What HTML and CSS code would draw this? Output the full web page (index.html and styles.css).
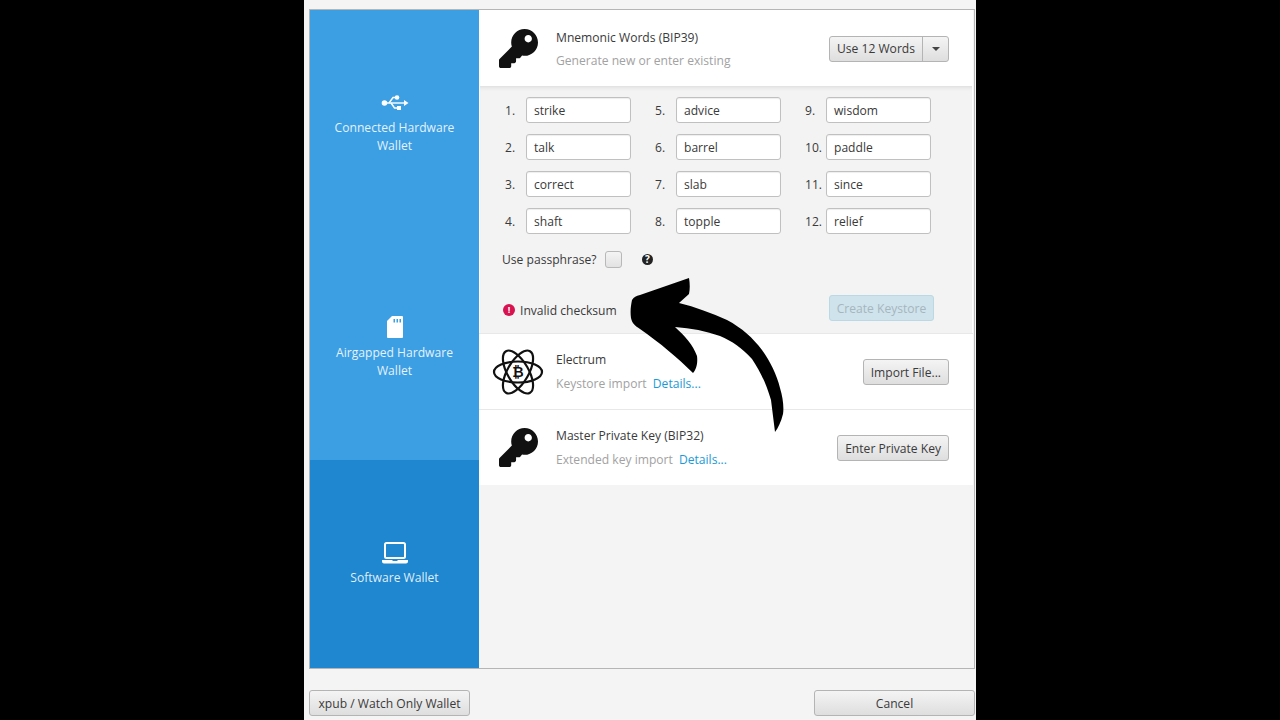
FILE: index.html
```html
<!DOCTYPE html>
<html>
<head>
    <title>Keystore Import</title>
    <meta charset="UTF-8">
    <link rel="stylesheet" href="styles.css">
</head>
<body>
    <div class="window">
	<div class="panel">
	    <div class="sidebar">
		<div class="side-item">
		    <svg class="side-icon" width="28" height="22" viewBox="0 -3 28 22">
			<circle cx="3.500" cy="8" r="2.800" fill="#fff"/>
			<path d="M4 8H24" stroke="#fff" stroke-width="1.400" fill="none"/>
			<path d="M23 5l4.500 3-4.500 3z" fill="#fff"/>
			<path d="M8 8l4-5.500h3M10 8l3.500 5H16" stroke="#fff" stroke-width="1.400" fill="none"/>
			<circle cx="16" cy="2.500" r="2.300" fill="#fff"/>
			<rect x="16" y="11" width="4" height="4" fill="#fff"/>
		    </svg>
		    <div class="side-label">Connected Hardware<br>Wallet</div>
		</div>
		<div class="side-item">
		    <svg class="side-icon sd" width="16" height="22" viewBox="0 0 16 22">
			<path d="M5 0h10a1 1 0 0 1 1 1v20a1 1 0 0 1-1 1H1a1 1 0 0 1-1-1V5z" fill="#fff"/>
			<path d="M6.500 3h1.500v3.500H6.500zM9.500 3h1.500v3.500H9.500zM12.500 3h1.500v3.500h-1.500z" fill="#3d9fe3"/>
		    </svg>
		    <div class="side-label">Airgapped Hardware<br>Wallet</div>
		</div>
		<div class="side-item selected">
		    <svg class="side-icon" width="26" height="22" viewBox="0 0 26 22">
			<rect x="3" y="1" width="20" height="15" rx="1.500" fill="none" stroke="#fff" stroke-width="2"/>
			<path d="M0 18h10l1 1h4l1-1h10v1.500a2 2 0 0 1-2 2H2a2 2 0 0 1-2-2z" fill="#fff"/>
		    </svg>
		    <div class="side-label">Software Wallet</div>
		</div>
	    </div>
	    <div class="content">
		<div class="row row-head">
		    <svg class="row-icon" width="39" height="39" viewBox="0 0 512 512"><path d="M512 176.001C512 273.203 433.202 352 336 352c-11.22 0-22.19-1.062-32.827-3.069l-24.012 27.014A23.999 23.999 0 0 1 261.223 384H224v40c0 13.255-10.745 24-24 24h-40v40c0 13.255-10.745 24-24 24H24c-13.255 0-24-10.745-24-24v-78.059c0-6.365 2.529-12.47 7.029-16.971l161.802-161.802C163.108 213.814 160 195.271 160 176 160 78.798 238.797.001 335.999 0 433.488-.001 512 78.511 512 176.001zM336 128c0 26.51 21.49 48 48 48s48-21.49 48-48-21.49-48-48-48-48 21.49-48 48z" fill="#111"/></svg>
		    <div class="row-text">
			<div class="row-title">Mnemonic Words (BIP39)</div>
			<div class="row-sub">Generate new or enter existing</div>
		    </div>
		    <div class="split-btn">
			<div class="split-main">Use 12 Words</div>
			<div class="split-arrow"><span class="caret"></span></div>
		    </div>
		</div>
		<div class="words">
		    <div class="word-grid">
			<div class="word"><span class="num">1.</span><span class="field">strike</span></div>
			<div class="word"><span class="num">5.</span><span class="field">advice</span></div>
			<div class="word"><span class="num">9.</span><span class="field">wisdom</span></div>
			<div class="word"><span class="num">2.</span><span class="field">talk</span></div>
			<div class="word"><span class="num">6.</span><span class="field">barrel</span></div>
			<div class="word"><span class="num">10.</span><span class="field">paddle</span></div>
			<div class="word"><span class="num">3.</span><span class="field">correct</span></div>
			<div class="word"><span class="num">7.</span><span class="field">slab</span></div>
			<div class="word"><span class="num">11.</span><span class="field">since</span></div>
			<div class="word"><span class="num">4.</span><span class="field">shaft</span></div>
			<div class="word"><span class="num">8.</span><span class="field">topple</span></div>
			<div class="word"><span class="num">12.</span><span class="field">relief</span></div>
		    </div>
		    <div class="passphrase">
			<span class="pass-label">Use passphrase?</span>
			<span class="checkbox"></span>
			<span class="help">?</span>
		    </div>
		    <div class="status">
			<span class="error-dot">!</span>
			<span class="error-text">Invalid checksum</span>
			<div class="btn btn-create">Create Keystore</div>
		    </div>
		</div>
		<div class="row row-import">
		    <svg class="row-icon atom" width="52" height="48" viewBox="0 0 52 48">
			<g fill="none" stroke="#111" stroke-width="2.200">
			    <ellipse cx="26" cy="24" rx="24" ry="10.500"/>
			    <ellipse cx="26" cy="24" rx="24" ry="10.500" transform="rotate(60 26 24)"/>
			    <ellipse cx="26" cy="24" rx="24" ry="10.500" transform="rotate(120 26 24)"/>
			</g>
			<text x="26" y="29" class="atom-b">₿</text>
		    </svg>
		    <div class="row-text">
			<div class="row-title">Electrum</div>
			<div class="row-sub">Keystore import <a class="link">Details...</a></div>
		    </div>
		    <div class="btn">Import File...</div>
		</div>
		<div class="row row-import">
		    <svg class="row-icon" width="39" height="39" viewBox="0 0 512 512"><path d="M512 176.001C512 273.203 433.202 352 336 352c-11.22 0-22.19-1.062-32.827-3.069l-24.012 27.014A23.999 23.999 0 0 1 261.223 384H224v40c0 13.255-10.745 24-24 24h-40v40c0 13.255-10.745 24-24 24H24c-13.255 0-24-10.745-24-24v-78.059c0-6.365 2.529-12.470 7.029-16.971l161.802-161.802C163.108 213.814 160 195.271 160 176 160 78.798 238.797.001 335.999 0 433.488-.001 512 78.511 512 176.001zM336 128c0 26.510 21.490 48 48 48s48-21.490 48-48-21.490-48-48-48-48 21.490-48 48z" fill="#111"/></svg>
		    <div class="row-text">
			<div class="row-title">Master Private Key (BIP32)</div>
			<div class="row-sub">Extended key import <a class="link">Details...</a></div>
		    </div>
		    <div class="btn">Enter Private Key</div>
		</div>
	    </div>
	</div>
	<div class="footer">
	    <div class="btn btn-xpub">xpub / Watch Only Wallet</div>
	    <div class="btn btn-cancel">Cancel</div>
	</div>
    </div>
    <!--arrow drawn over the screenshot-->
    <svg class="arrow" width="1280" height="720" viewBox="0 0 1280 720">
	<path d="M689 278C690 284 690 289 689 294L679 303C695 307 712 313 727 320C742 328 753 338 762 350C770 361 777 375 780 388C783 398 784 407 783 414C781 422 778 428 775 432L771 400C766 383 760 371 752 359C742 348 732 341 720 336C706 331 691 328 675 327C685 336 693 345 697 356C698 364 696 370 693 373C678 358 660 343 640 329C635 326 632 323 631 318C630 311 631 305 632 300C634 297 636 296 640 295z" fill="#000"/>
    </svg>
</body>
</html>
```
FILE: styles.css
```css
body{
    margin:0;
    padding:0;
    background:#000;
    font-family:"Open Sans","Noto Sans",sans-serif;
    font-size:12.1px;
    color:#3a3a3a;
}
.window{
    box-sizing:border-box;
    width:672px;
    height:720px;
    margin:0 auto;
    padding:9px 1px 0 5px;
    background:#f4f4f4;
    overflow:hidden;
}
.panel{
    box-sizing:border-box;
    display:flex;
    height:660px;
    border:1px solid #b5b5b5;
    background:#f4f4f4;
}

/* left column */
.sidebar{
    display:flex;
    flex-direction:column;
    width:169px;
    flex:none;
    background:#3d9fe3;
}
.side-item{
    display:flex;
    flex-direction:column;
    align-items:center;
    justify-content:center;
    height:225px;
    flex:none;
    text-align:center;
    color:rgba(255,255,255,.88);
    line-height:18px;
}
.side-item.selected{
    height:auto;
    flex:1;
    background:#1e87cf;
}
.side-icon{
    display:block;
    margin-top:1px;
    margin-bottom:5px;
}
.side-icon.sd{
    margin-top:0;
    margin-bottom:6px;
}

/* right column */
.content{
    flex:1;
    min-width:0;
    padding-right:1px;
}
.row{
    box-sizing:border-box;
    display:flex;
    align-items:center;
    background:#fff;
    padding:0 24px 0 20px;
}
.row-head{
    height:76px;
}
.row-head .row-text{
    padding-top:2px;
}
.row-import{
    height:75px;
    margin-top:1px;
    box-shadow:0 -1px 0 #e8e8e8;
}
.row-icon{
    flex:none;
    margin-right:18px;
}
.atom{
    width:52px;
    margin-left:-7px;
    margin-right:12px;
}
.atom-b{
    font-family:"DejaVu Sans",sans-serif;
    font-size:14px;
    font-weight:bold;
    fill:#111;
    text-anchor:middle;
}
.row-text{
    flex:1;
    min-width:0;
    padding-top:1px;
}
.row-title{
    line-height:18px;
    margin-bottom:6px;
}
.row-head .row-title{
    margin-bottom:5px;
}
.row-sub{
    color:#a2a2a2;
    line-height:18px;
}
.link{
    color:#1a9ad6;
    margin-left:3px;
}

/* buttons */
.btn{
    box-sizing:border-box;
    height:26px;
    line-height:25px;
    padding:0 7px;
    border:1px solid #b4b4b4;
    border-radius:3px;
    background:linear-gradient(#f4f4f4,#dedede);
    text-align:center;
    white-space:nowrap;
}
.split-btn{
    display:flex;
    height:26px;
    box-sizing:border-box;
    margin-top:2px;
    border:1px solid #b4b4b4;
    border-radius:3px;
    background:linear-gradient(#f4f4f4,#dedede);
    line-height:24px;
}
.split-main{
    padding:0 7px;
    border-right:1px solid #b4b4b4;
}
.split-arrow{
    display:flex;
    align-items:center;
    justify-content:center;
    width:25px;
}
.caret{
    width:0;
    height:0;
    border-left:4px solid transparent;
    border-right:4px solid transparent;
    border-top:4px solid #444;
}

/* word entry */
.words{
    box-sizing:border-box;
    height:247px;
    padding:11px 0 0 22px;
    background:#f3f3f3;
    border-left:1px solid #fff;
    border-right:1px solid #fff;
    box-shadow:inset 0 4px 4px -3px #d8d8d8;
}
.word-grid{
    display:grid;
    grid-template-columns:repeat(3,150px);
    row-gap:11px;
}
.word{
    display:flex;
    align-items:center;
}
.num{
    width:24px;
    flex:none;
    padding-left:3px;
    box-sizing:border-box;
    white-space:nowrap;
}
.field{
    box-sizing:border-box;
    width:105px;
    height:26px;
    line-height:26px;
    padding:0 7px;
    background:#fff;
    border:1px solid #c0c0c0;
    border-radius:3px;
    box-shadow:inset 0 1px 1px #eee;
}
.passphrase{
    display:flex;
    align-items:center;
    height:18px;
    margin-top:16px;
}
.pass-label{
    width:92px;
    white-space:nowrap;
}
.checkbox{
    box-sizing:border-box;
    width:17px;
    height:17px;
    margin-left:11px;
    border:1px solid #b8b8b8;
    border-radius:3px;
    background:linear-gradient(#f4f4f4,#e2e2e2);
}
.help{
    width:11px;
    height:11px;
    margin-left:20px;
    border-radius:50%;
    background:#222;
    color:#fff;
    font-size:10px;
    font-weight:bold;
    line-height:11px;
    text-align:center;
}
.status{
    display:flex;
    align-items:center;
    margin-top:27px;
    padding-right:38px;
}
.error-dot{
    width:12px;
    height:12px;
    margin:4px 5px 0 1px;
    border-radius:50%;
    background:#d7124f;
    color:#fff;
    font-size:9px;
    font-weight:bold;
    line-height:12px;
    text-align:center;
}
.error-text{
    flex:1;
    margin-top:4px;
}
.btn.btn-create{
    width:105px;
    padding:0;
    background:#cfe3ec;
    border-color:#bcd8e4;
    color:#a6b6bd;
}

/* bottom buttons */
.footer{
    display:flex;
    justify-content:space-between;
    margin-top:21px;
}
.btn-xpub{
    width:161px;
    padding:0;
}
.btn-cancel{
    width:161px;
    padding:0;
}

.arrow{
    position:absolute;
    top:0;
    left:0;
    pointer-events:none;
}
```
